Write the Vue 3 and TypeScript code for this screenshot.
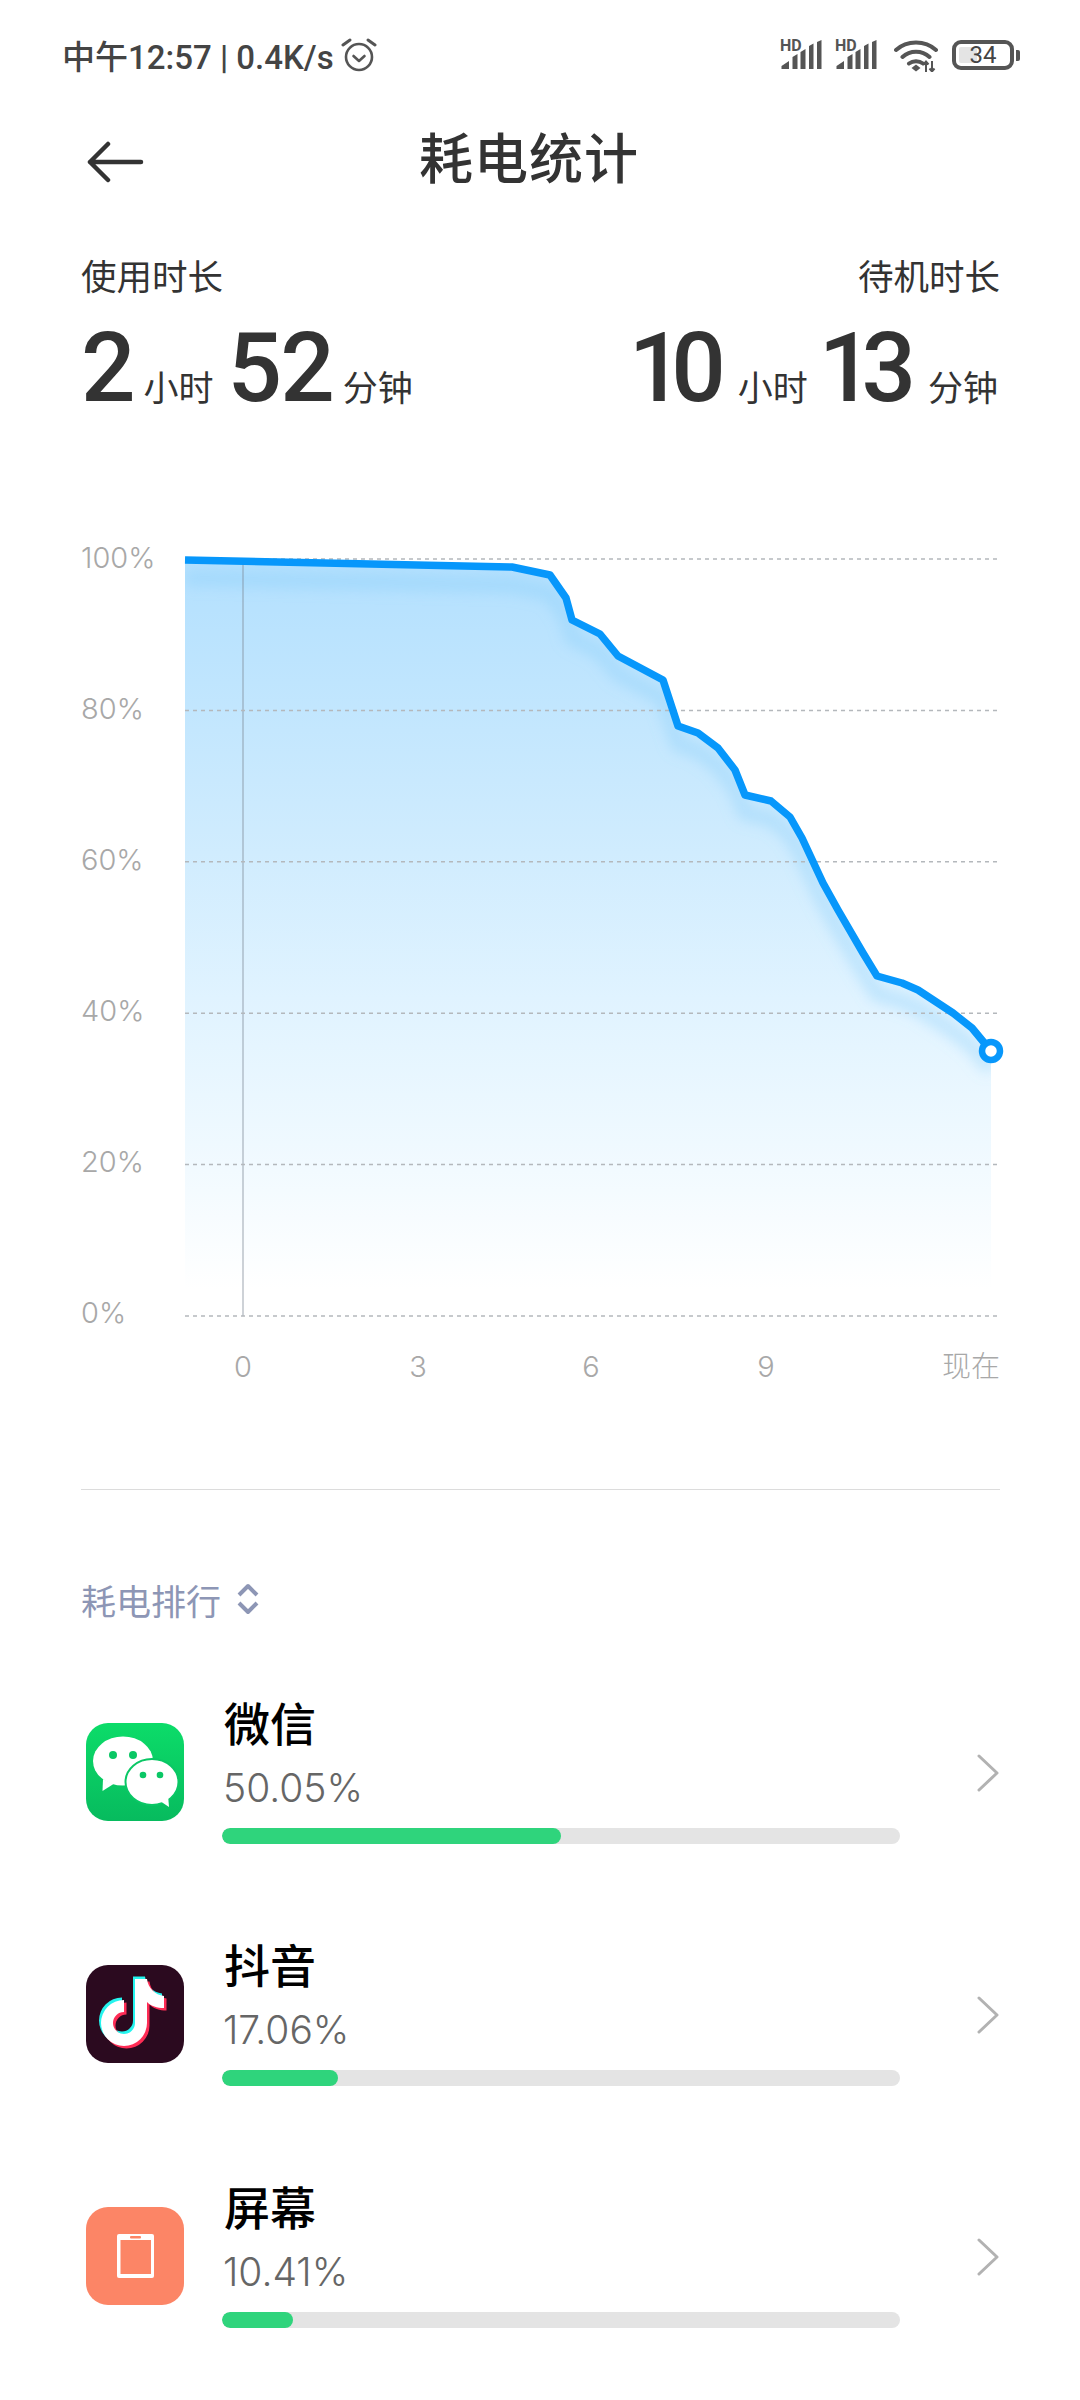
<script setup lang="ts">
interface AppRow {
  name: string
  percent: number
  kind: 'wechat' | 'douyin' | 'screen'
}

// 曲线折点，坐标和页面一致
const points: [number, number][] = [
  [185, 560], [512, 567], [550, 575], [566, 598], [572, 620], [600, 634], [618, 656],
  [663, 680], [678, 726], [698, 733], [718, 748], [735, 770], [745, 795], [771, 801],
  [790, 817], [802, 838], [823, 883], [838, 910], [863, 953], [877, 976], [902, 983],
  [918, 990], [953, 1013], [972, 1028], [991, 1051]
]
const linePath = 'M' + points.map(p => p.join(' ')).join(' L')
const areaPath = linePath + ' L991 1316 L185 1316 Z'

const yLabels = ['100%', '80%', '60%', '40%', '20%', '0%'].map((text, i) => ({
  text,
  y: 559 + i * 151.4,
  textY: 568 + i * 151
}))
const xLabels = [
  { text: '0', x: 243 },
  { text: '3', x: 418 },
  { text: '6', x: 591 },
  { text: '9', x: 766 }
]

const apps: AppRow[] = [
  { name: '微信', percent: 50.05, kind: 'wechat' },
  { name: '抖音', percent: 17.06, kind: 'douyin' },
  { name: '屏幕', percent: 10.41, kind: 'screen' }
]
</script>

<template>
  <div class="page">
    <div class="status">
      <div class="status-left">
        <span>中午12:57 | 0.4K/s</span>
        <svg class="alarm" viewBox="0 0 36 36" width="36" height="36">
          <circle cx="18" cy="20" r="13" fill="none" stroke="#555" stroke-width="2.6" />
          <path d="M12.500 19l5.500 5 5.500-5" fill="none" stroke="#555" stroke-width="2.600" stroke-linecap="round" stroke-linejoin="round" />
          <path d="M2 8l7-5M34 8l-7-5" fill="none" stroke="#555" stroke-width="3" stroke-linecap="round" />
        </svg>
      </div>
      <div class="status-right">
        <div v-for="n in 2" :key="n" class="signal">
          <span class="hd">HD</span>
          <svg viewBox="0 0 42 30" width="42" height="30">
            <path d="M1.500 29v-3l7.500-5v8zM12.500 29V17l5-3v15zM20.500 29V12l5-3v20zM29 29V6l4.500-2.500V29zM37 29V2l4.500-2v29z" fill="#555" />
          </svg>
        </div>
        <svg class="wifi" viewBox="0 0 44 32" width="44" height="32">
          <path d="M2 10C13 0 31 0 42 10M8.500 17C16 10 28 10 35.500 17M15 23.500C19 20.500 25 20.500 29 23.500" fill="none" stroke="#555" stroke-width="4" stroke-linecap="round" />
          <path d="M17.500 28l4.500-3.500 4.500 3.500-4.500 3.500z" fill="#555" />
          <path d="M32 21v11M38 21v11M29.500 24.500l2.500-3 2.500 3M35.500 28.500l2.500 3 2.500-3" fill="none" stroke="#555" stroke-width="2" />
        </svg>
        <div class="battery">
          <div class="battery-level"></div>
          <span class="battery-text">34</span>
        </div>
        <div class="battery-nub"></div>
      </div>
    </div>

    <div class="header">
      <svg class="back" viewBox="0 0 58 42" width="58" height="42">
        <path d="M4 21H55M22 3L4 21l18 18" fill="none" stroke="#333" stroke-width="4.500" stroke-linecap="round" stroke-linejoin="round" />
      </svg>
      <div class="title">耗电统计</div>
    </div>

    <div class="stats">
      <div>
        <div class="stat-label">使用时长</div>
        <div class="stat-value"><b>2</b><i>小时</i><b>52</b><i>分钟</i></div>
      </div>
      <div class="stat-right">
        <div class="stat-label">待机时长</div>
        <div class="stat-value"><b>10</b><i>小时</i><b>13</b><i>分钟</i></div>
      </div>
    </div>

    <svg class="chart" viewBox="0 520 1080 880" width="1080" height="880">
      <defs>
        <linearGradient id="areaFill" gradientUnits="userSpaceOnUse" x1="0" y1="560" x2="0" y2="1290">
          <stop offset="0" stop-color="#b3e0fe" />
          <stop offset="0.4" stop-color="#d0ecfe" />
          <stop offset="0.6" stop-color="#e0f3ff" />
          <stop offset="0.8" stop-color="#eff9ff" />
          <stop offset="1" stop-color="#ffffff" />
        </linearGradient>
        <clipPath id="areaClip">
          <path :d="areaPath" />
        </clipPath>
        <filter id="lineBlur" x="-10%" y="-10%" width="120%" height="120%">
          <feGaussianBlur stdDeviation="7" />
        </filter>
      </defs>

      <path :d="areaPath" fill="url(#areaFill)" />
      <g clip-path="url(#areaClip)">
        <path :d="linePath" transform="translate(0 18)" fill="none" stroke="#84cdfb" stroke-opacity="0.4" stroke-width="14" filter="url(#lineBlur)" />
      </g>

      <line x1="243" y1="564" x2="243" y2="1316" class="v-line" />
      <template v-for="item in yLabels" :key="item.text">
        <line x1="185" x2="998" :y1="item.y" :y2="item.y" class="grid-line" />
        <text x="81" :y="item.textY" class="axis-text">{{ item.text }}</text>
      </template>
      <text v-for="item in xLabels" :key="item.text" :x="item.x" y="1377" text-anchor="middle" class="axis-text">{{ item.text }}</text>
      <text x="1000" y="1377" text-anchor="end" class="axis-text">现在</text>

      <path :d="linePath" fill="none" stroke="#0797fb" stroke-width="7.500" stroke-linejoin="round" />
      <circle cx="991" cy="1051" r="9" fill="#fff" stroke="#0797fb" stroke-width="6.500" />
    </svg>

    <div class="divider"></div>

    <div class="rank">
      <span>耗电排行</span>
      <svg viewBox="0 0 22 32" width="22" height="32">
        <path d="M2 12l9-9 9 9M2 20l9 9 9-9" fill="none" stroke="#8d96b5" stroke-width="4" stroke-linejoin="round" />
      </svg>
    </div>

    <div class="list">
      <div v-for="app in apps" :key="app.name" class="row">
        <svg class="app-icon" viewBox="0 0 98 98" width="98" height="98">
          <template v-if="app.kind === 'wechat'">
            <defs>
              <linearGradient id="wechatBg" x1="0" y1="0" x2="0" y2="1">
                <stop offset="0" stop-color="#0cdc69" />
                <stop offset="1" stop-color="#07bb5e" />
              </linearGradient>
            </defs>
            <rect width="98" height="98" rx="22" fill="url(#wechatBg)" />
            <ellipse cx="37" cy="38" rx="30" ry="24.500" fill="#fff" />
            <path d="M17 56l-0.500 12 11-7z" fill="#fff" />
            <ellipse cx="66" cy="59" rx="26.500" ry="23" fill="#fff" stroke="#0ac765" stroke-width="2" />
            <path d="M74 78l9 6-1-12z" fill="#fff" />
            <circle cx="27" cy="32" r="4" fill="#0ac765" />
            <circle cx="47" cy="32" r="4" fill="#0ac765" />
            <circle cx="57" cy="52" r="3.300" fill="#0ac765" />
            <circle cx="74" cy="52" r="3.300" fill="#0ac765" />
          </template>
          <template v-else-if="app.kind === 'douyin'">
            <rect width="98" height="98" rx="22" fill="#2b0a1f" />
            <path transform="translate(-2 -2.500)" fill="#25f4ee" d="M49 14H61C62 23 69 30 78 31V43C71 43 65 41 61 37V58A23 23 0 1 1 38 35V47A11 11 0 1 0 49 58Z" />
            <path transform="translate(2.500 2.500)" fill="#fe2c55" d="M49 14H61C62 23 69 30 78 31V43C71 43 65 41 61 37V58A23 23 0 1 1 38 35V47A11 11 0 1 0 49 58Z" />
            <path fill="#fff" d="M49 14H61C62 23 69 30 78 31V43C71 43 65 41 61 37V58A23 23 0 1 1 38 35V47A11 11 0 1 0 49 58Z" />
          </template>
          <template v-else>
            <rect width="98" height="98" rx="22" fill="#fc8566" />
            <rect x="31" y="27" width="37" height="44" rx="2" fill="#fff" />
            <rect x="34.500" y="33" width="30.500" height="34" fill="#fc8566" />
            <rect x="44" y="29" width="11" height="2.500" rx="1" fill="#fc8566" />
          </template>
        </svg>
        <div class="body">
          <div class="name">{{ app.name }}</div>
          <div class="percent">{{ app.percent.toFixed(2) }}%</div>
          <div class="track">
            <div class="fill" :style="{ width: app.percent + '%' }"></div>
          </div>
        </div>
        <svg class="chevron" viewBox="0 0 22 38" width="22" height="38">
          <path d="M2 2l18 17L2 36" fill="none" stroke="#b2b2b2" stroke-width="3" stroke-linecap="round" stroke-linejoin="round" />
        </svg>
      </div>
    </div>
  </div>
</template>

<style scoped>
.page {
  width: 1080px;
  height: 2400px;
  overflow: hidden;
  background: #fff;
  font-family: Roboto, "Noto Sans CJK SC", sans-serif;
  color: #333;
}

.status {
  height: 110px;
  padding: 37px 60px 0 62px;
  box-sizing: border-box;
  display: flex;
  justify-content: space-between;
  align-items: flex-start;
}

.status-left {
  display: flex;
  align-items: center;
  gap: 7px;
  height: 36px;
  font-size: 33px;
  font-weight: 500;
  color: #444;
  white-space: nowrap;
}

.status-right {
  display: flex;
  align-items: flex-start;
  height: 36px;
  padding-top: 3px;
}

.signal {
  position: relative;
  width: 42px;
  height: 30px;
  margin-right: 13px;
}

.signal svg {
  display: block;
}

.hd {
  position: absolute;
  left: 0;
  top: -3px;
  font-size: 16px;
  line-height: 18px;
  font-weight: 700;
  color: #555;
}

.wifi {
  margin-left: 4px;
}

.battery {
  position: relative;
  width: 62px;
  height: 30px;
  margin-left: 14px;
  box-sizing: border-box;
  border: 4px solid #555;
  border-radius: 9px;
}

.battery-level {
  width: 18px;
  height: 16px;
  margin: 3px 0 0 3px;
  background: #e4e4e4;
  border-radius: 2px;
}

.battery-text {
  position: absolute;
  left: 0;
  right: 0;
  top: 0;
  text-align: center;
  font-size: 24px;
  line-height: 22px;
  color: #444;
}

.battery-nub {
  width: 4px;
  height: 11px;
  margin: 10px 0 0 2px;
  background: #555;
  border-radius: 0 2px 2px 0;
}

.header {
  height: 100px;
  padding-left: 86px;
  display: flex;
  align-items: center;
}

.back {
  margin-top: 4px;
}

.title {
  margin: 0 0 10px 275px;
  font-size: 54px;
  font-weight: 500;
  letter-spacing: 1px;
  color: #333;
}

.stats {
  margin-top: 43px;
  height: 170px;
  padding: 0 80px 0 81px;
  display: flex;
  justify-content: space-between;
}

.stat-right {
  text-align: right;
}

.stat-label {
  font-size: 35.500px;
  line-height: 50px;
  color: #333;
}

.stat-value {
  margin-top: 15px;
  height: 100px;
  display: flex;
  align-items: baseline;
}

.stat-right .stat-value {
  justify-content: flex-end;
  padding-right: 2px;
}

.stat-value b {
  font-size: 96px;
  line-height: 100px;
  font-weight: 500;
  letter-spacing: -2px;
  color: #333;
}

.stat-right .stat-value b {
  letter-spacing: -12px;
}

.stat-value i {
  font-style: normal;
  font-size: 35px;
  margin: 0 14px 0 10px;
  color: #333;
}

.stat-right .stat-value i {
  margin: 0 11px 0 24px;
}

.stat-value i:last-child {
  margin-right: 0;
}

.chart {
  display: block;
  margin-top: 97px;
}

.grid-line {
  stroke: #b4b8bc;
  stroke-width: 1.5;
  stroke-dasharray: 4 4;
}

.v-line {
  stroke: #7d8a96;
  stroke-opacity: 0.5;
  stroke-width: 1.5;
}

.axis-text {
  font-family: Inter, "Noto Sans CJK SC", sans-serif;
  font-size: 29px;
  font-weight: 300;
  fill: #a8a8a8;
}

.divider {
  height: 1px;
  margin: 89px 80px 0 81px;
  background: #dcdcdc;
}

.rank {
  margin: 84px 0 0 81px;
  height: 50px;
  display: flex;
  align-items: center;
  gap: 16px;
  font-size: 35px;
  color: #8d96b5;
}

.list {
  margin-top: 51px;
}

.row {
  height: 242px;
  padding: 20px 0 0 86px;
  box-sizing: border-box;
  display: flex;
  align-items: flex-start;
}

.app-icon {
  margin-top: 28px;
  flex: none;
}

.body {
  width: 678px;
  margin-left: 38px;
}

.name {
  padding-left: 2px;
  font-size: 46px;
  line-height: 60px;
  font-weight: 500;
  color: #000;
}

.percent {
  margin-top: 5px;
  padding-left: 1px;
  font-family: Inter, sans-serif;
  font-size: 39px;
  line-height: 56px;
  font-weight: 300;
  color: #666;
}

.track {
  margin-top: 12px;
  height: 16px;
  border-radius: 8px;
  background: #e4e4e4;
  overflow: hidden;
}

.fill {
  height: 100%;
  border-radius: 8px;
  background: #2fd47c;
}

.chevron {
  margin: 59px 0 0 77px;
  flex: none;
}
</style>

<style>
html,
body {
  margin: 0;
  background: #fff;
}
</style>
